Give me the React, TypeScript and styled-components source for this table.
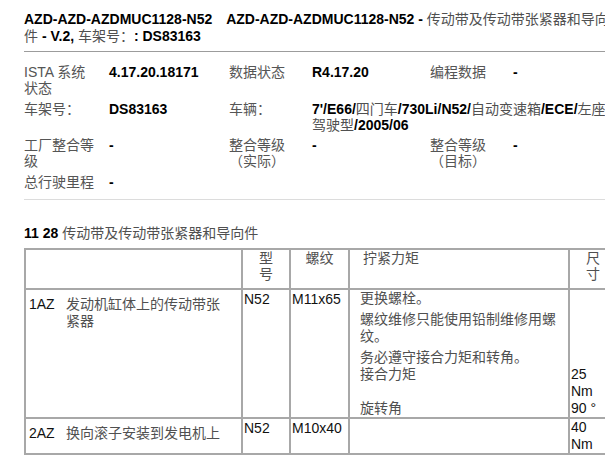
import styled, { createGlobalStyle } from "styled-components";

const GlobalStyle = createGlobalStyle`
	html, body {
		margin: 0;
		padding: 0;
		overflow: hidden;
		background: #fff;
	}
	body {
		font-family: "Liberation Sans", "Noto Sans CJK SC", sans-serif;
		font-size: 14px;
		color: #1a1a1a;
	}
`;

export default function App() {
	return (
		<Page>
			<GlobalStyle />

			<DocTitle>
				<B>AZD-AZD-AZDMUC1128-N52</B>
				<Spacer />{" "}
				<B>AZD-AZD-AZDMUC1128-N52 - </B>
				<Cjk>传动带及传动带张紧器和导向件</Cjk> <B>- V.2,</B> <Cjk>车架号：</Cjk>
				<B>: DS83163</B>
			</DocTitle>

			<InfoGrid>
				<Label>ISTA 系统状态</Label>
				<Value>4.17.20.18171</Value>
				<Label>数据状态</Label>
				<Value>R4.17.20</Value>
				<Label>编程数据</Label>
				<Value>-</Value>

				<Label>车架号：</Label>
				<Value>DS83163</Value>
				<Label>车辆：</Label>
				<Value $span={3}>
					7'/E66/<Cjk>四门车</Cjk>/730Li/N52/<Cjk>自动变速箱</Cjk>/ECE/<Cjk>左座驾驶型</Cjk>/2005/06
				</Value>

				<Label>工厂整合等级</Label>
				<Value>-</Value>
				<Label>整合等级（实际）</Label>
				<Value>-</Value>
				<Label>整合等级（目标）</Label>
				<Value>-</Value>

				<Label>总行驶里程</Label>
				<Value>-</Value>
			</InfoGrid>

			<SectionTitle>
				<B>11 28</B> <Cjk>传动带及传动带张紧器和导向件</Cjk>
			</SectionTitle>

			<Table>
				<colgroup>
					<Col $w={217} />
					<Col $w={48} />
					<Col $w={59} />
					<Col $w={220} />
					<Col $w={48} />
				</colgroup>
				<thead>
					<tr>
						<Th />
						<Th $align="center">型号</Th>
						<Th $align="center">螺纹</Th>
						<Th>拧紧力矩</Th>
						<Th $align="center">尺寸</Th>
					</tr>
				</thead>
				<tbody>
					<tr>
						<ItemCell rowSpan={3}>
							<Item>
								<Code>1AZ</Code>
								<Desc>发动机缸体上的传动带张紧器</Desc>
							</Item>
						</ItemCell>
						<Td rowSpan={3}>N52</Td>
						<Td rowSpan={3}>M11x65</Td>
						<NoteCell $noBottom>
							<Note>更换螺栓。</Note>
							<Note>螺纹维修只能使用铅制维修用螺纹。</Note>
							<Note>务必遵守接合力矩和转角。</Note>
						</NoteCell>
						<ValueCell $noBottom />
					</tr>
					<tr>
						<NoteCell $noTop $noBottom>接合力矩</NoteCell>
						<ValueCell $noTop $noBottom>25 Nm</ValueCell>
					</tr>
					<tr>
						<NoteCell $noTop>旋转角</NoteCell>
						<ValueCell $noTop>90 °</ValueCell>
					</tr>
					<tr>
						<ItemCell>
							<Item>
								<Code>2AZ</Code>
								<Desc>换向滚子安装到发电机上</Desc>
							</Item>
						</ItemCell>
						<Td>N52</Td>
						<Td>M10x40</Td>
						<NoteCell />
						<ValueCell>40 Nm</ValueCell>
					</tr>
				</tbody>
			</Table>
		</Page>
	);
}

const Page = styled.div`
	width: 592px;
	padding: 11px 0 0 24px;
`;

const B = styled.b`
	font-weight: 700;
	color: #000;
`;

// the CJK runs in the source are a thin song face, so they read lighter
const Cjk = styled.span`
	font-weight: 400;
	color: #505050;
`;

const Spacer = styled.span`
	display: inline-block;
	width: 10px;
`;

const DocTitle = styled.div`
	line-height: 16.5px;
	padding-bottom: 7px;
	border-bottom: 1px solid #9c9c9c;
`;

const InfoGrid = styled.div`
	display: grid;
	grid-template-columns: 73px 108px 71px 106px 71px 1fr;
	column-gap: 12px;
	padding: 10px 10px 7px 0;
	border-bottom: 1px solid #dcdcdc;
	line-height: 16px;
`;

const Label = styled.div`
	padding: 2px 0 2.6px;
	color: #555;
`;

const Value = styled.div<{ $span?: number }>`
	grid-column: span ${(p) => p.$span ?? 1};
	padding: 2px 0 2.6px;
	font-weight: 700;
	color: #000;
`;

const SectionTitle = styled.div`
	margin-top: 25px;
	line-height: 16px;
`;

const Table = styled.table`
	width: 592px;
	margin-top: 7px;
	table-layout: fixed;
	border-collapse: collapse;
	line-height: 17px;
`;

const Col = styled.col<{ $w: number }>`
	width: ${(p) => p.$w}px;
`;

const Th = styled.th<{ $align?: "left" | "center" }>`
	border: 2px solid #a8a8a8;
	padding: 0 13px 6px;
	line-height: 16px;
	font-weight: 400;
	color: #505050;
	text-align: ${(p) => p.$align ?? "left"};
	vertical-align: top;
`;

const Td = styled.td<{ $noTop?: boolean; $noBottom?: boolean }>`
	border: 2px solid #a8a8a8;
	border-top-style: ${(p) => (p.$noTop ? "none" : "solid")};
	border-bottom-style: ${(p) => (p.$noBottom ? "none" : "solid")};
	padding: 1px 1px 0;
	vertical-align: top;
	color: #111;
`;

const ItemCell = styled(Td)`
	padding: 6px 4px 0 3px;
`;

const NoteCell = styled(Td)`
	padding: 0 8px 0 10px;
	color: #505050;
`;

const ValueCell = styled(Td)`
	padding: 0 14px 0 1px;
`;

const Item = styled.div`
	display: flex;
	align-items: flex-start;
`;

const Code = styled.span`
	flex: 0 0 37px;
	color: #111;
`;

const Desc = styled.span`
	max-width: 160px;
	color: #505050;
`;

const Note = styled.p`
	margin: 0 0 4px;
	&:last-child {
		margin-bottom: 0;
	}
`;
